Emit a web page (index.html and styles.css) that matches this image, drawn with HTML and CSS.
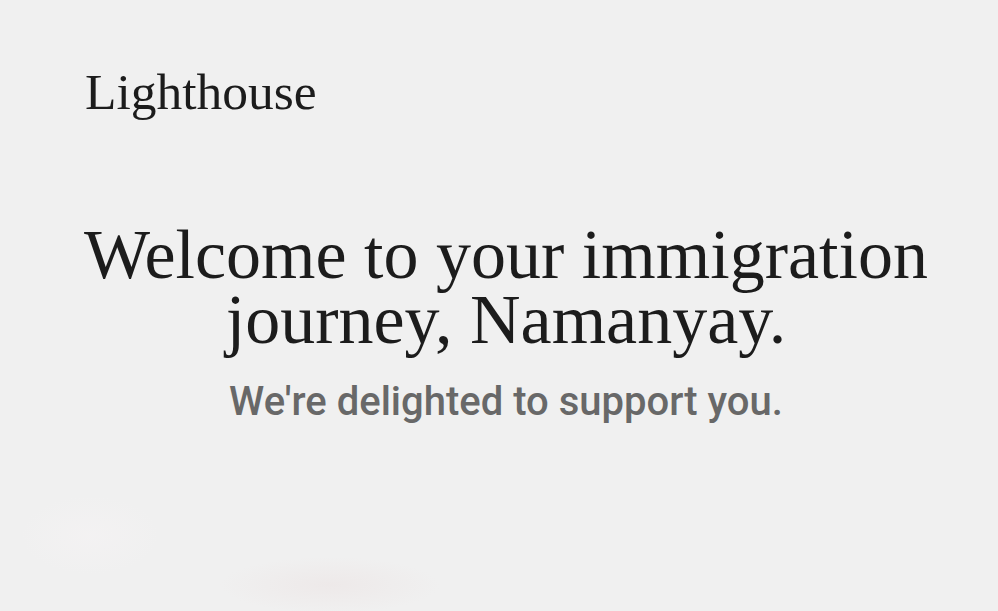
FILE: index.html
```html
<!DOCTYPE html>
<html lang="en">
<head>
<meta charset="utf-8">
<title>Lighthouse</title>
<link rel="stylesheet" href="styles.css">
</head>
<body>
<div class="page">
  <header class="topbar">
    <div class="brand">Lighthouse</div>
  </header>
  <main class="hero">
    <h1 class="headline">Welcome to your immigration<br>journey, Namanyay.</h1>
    <p class="subline">We're delighted to support you.</p>
  </main>
</div>
</body>
</html>
```
FILE: styles.css
```css
html, body {
  margin: 0;
  padding: 0;
  height: 100%;
}
body {
  background: #f0f0f0;
  overflow: hidden;
}
.page {
  position: relative;
  min-height: 611px;
  background:
    radial-gradient(ellipse 110px 28px at 330px 585px, rgba(235, 226, 226, 0.5), rgba(240,240,240,0) 100%),
    radial-gradient(ellipse 70px 40px at 90px 535px, rgba(244, 242, 243, 0.8), rgba(240,240,240,0) 100%),
    #f0f0f0;
}
.topbar {
  padding: 64px 0 0 85px;
}
.brand {
  font-family: "Liberation Serif", "DejaVu Serif", serif;
  font-size: 51.5px;
  line-height: 56px;
  color: #1c1c1c;
}
.hero {
  padding: 102px 0 0 14px;
  text-align: center;
}
.headline {
  margin: 0;
  font-family: "Liberation Serif", "DejaVu Serif", serif;
  font-weight: 400;
  font-size: 70px;
  line-height: 65px;
  color: #1c1c1c;
}
.subline {
  margin: 26px 0 0;
  font-family: Roboto, "Liberation Sans", sans-serif;
  font-weight: 500;
  font-size: 40px;
  color: #686868;
}
```
